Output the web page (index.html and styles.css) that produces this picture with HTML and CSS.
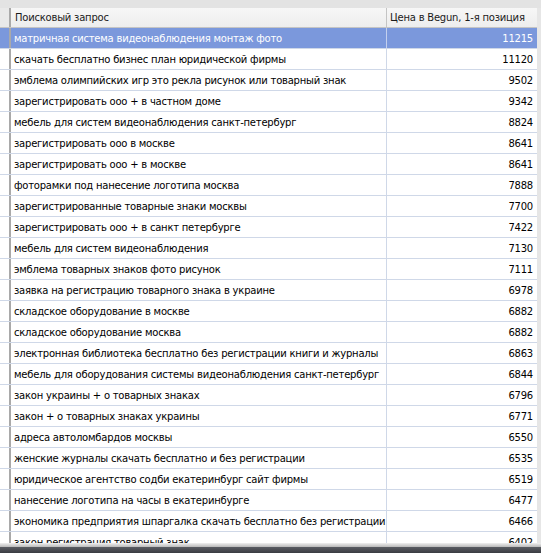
FILE: index.html
```html
<!DOCTYPE html>
<html>
<head>
<meta charset="utf-8">
<link rel="stylesheet" href="styles.css">
</head>
<body>
<div class="window">
  <div class="topbar"></div>
  <div class="main">
    <div class="grid">
      <div class="row head">
        <div class="rh"></div>
        <div class="c1">Поисковый запрос</div>
        <div class="c2">Цена в Begun, 1-я позиция</div>
      </div>
      <div class="body">
        <div class="row sel"><div class="rh"></div><div class="c1">матричная система видеонаблюдения монтаж фото</div><div class="c2">11215</div></div>
        <div class="row"><div class="rh"></div><div class="c1">скачать бесплатно бизнес план юридической фирмы</div><div class="c2">11120</div></div>
        <div class="row"><div class="rh"></div><div class="c1">эмблема олимпийских игр это рекла рисунок или товарный знак</div><div class="c2">9502</div></div>
        <div class="row"><div class="rh"></div><div class="c1">зарегистрировать ооо + в частном доме</div><div class="c2">9342</div></div>
        <div class="row"><div class="rh"></div><div class="c1">мебель для систем видеонаблюдения санкт-петербург</div><div class="c2">8824</div></div>
        <div class="row"><div class="rh"></div><div class="c1">зарегистрировать ооо в москве</div><div class="c2">8641</div></div>
        <div class="row"><div class="rh"></div><div class="c1">зарегистрировать ооо + в москве</div><div class="c2">8641</div></div>
        <div class="row"><div class="rh"></div><div class="c1">фоторамки под нанесение логотипа москва</div><div class="c2">7888</div></div>
        <div class="row"><div class="rh"></div><div class="c1">зарегистрированные товарные знаки москвы</div><div class="c2">7700</div></div>
        <div class="row"><div class="rh"></div><div class="c1">зарегистрировать ооо + в санкт петербурге</div><div class="c2">7422</div></div>
        <div class="row"><div class="rh"></div><div class="c1">мебель для систем видеонаблюдения</div><div class="c2">7130</div></div>
        <div class="row"><div class="rh"></div><div class="c1">эмблема товарных знаков фото рисунок</div><div class="c2">7111</div></div>
        <div class="row"><div class="rh"></div><div class="c1">заявка на регистрацию товарного знака в украине</div><div class="c2">6978</div></div>
        <div class="row"><div class="rh"></div><div class="c1">складское оборудование в москве</div><div class="c2">6882</div></div>
        <div class="row"><div class="rh"></div><div class="c1">складское оборудование москва</div><div class="c2">6882</div></div>
        <div class="row"><div class="rh"></div><div class="c1">электронная библиотека бесплатно без регистрации книги и журналы</div><div class="c2">6863</div></div>
        <div class="row"><div class="rh"></div><div class="c1">мебель для оборудования системы видеонаблюдения санкт-петербург</div><div class="c2">6844</div></div>
        <div class="row"><div class="rh"></div><div class="c1">закон украины + о товарных знаках</div><div class="c2">6796</div></div>
        <div class="row"><div class="rh"></div><div class="c1">закон + о товарных знаках украины</div><div class="c2">6771</div></div>
        <div class="row"><div class="rh"></div><div class="c1">адреса автоломбардов москвы</div><div class="c2">6550</div></div>
        <div class="row"><div class="rh"></div><div class="c1">женские журналы скачать бесплатно и без регистрации</div><div class="c2">6535</div></div>
        <div class="row"><div class="rh"></div><div class="c1">юридическое агентство содби екатеринбург сайт фирмы</div><div class="c2">6519</div></div>
        <div class="row"><div class="rh"></div><div class="c1">нанесение логотипа на часы в екатеринбурге</div><div class="c2">6477</div></div>
        <div class="row"><div class="rh"></div><div class="c1">экономика предприятия шпаргалка скачать бесплатно без регистрации</div><div class="c2">6466</div></div>
        <div class="row"><div class="rh"></div><div class="c1">закон регистрация товарный знак</div><div class="c2">6402</div></div>
      </div>
    </div>
    <div class="gutter"></div>
  </div>
  <div class="bottom"><div class="b1"></div><div class="b2"></div></div>
</div>
</body>
</html>
```

FILE: styles.css
```css
html, body {
  margin: 0;
  padding: 0;
  background: #e6e6e6;
}
.window {
  width: 541px;
  height: 553px;
  display: flex;
  flex-direction: column;
  overflow: hidden;
  font-family: "DejaVu Sans", Tahoma, sans-serif;
  font-size: 10px;
  letter-spacing: -0.22px;
  color: #000;
}
.topbar {
  height: 8px;
  flex: none;
  background: #e3e3e3;
}
.main {
  flex: 1;
  display: flex;
  min-height: 0;
}
.grid {
  width: 537px;
  flex: none;
  background: #fff;
  display: flex;
  flex-direction: column;
  overflow: hidden;
}
.gutter {
  flex: 1;
  background: #e6e6e6;
}
.body {
  flex: 1;
  overflow: hidden;
}
.row {
  display: grid;
  grid-template-columns: 11px 376px 1fr;
  height: 20px;
  border-bottom: 1px solid #cfd8e8;
}
.row > div {
  display: flex;
  align-items: center;
  white-space: nowrap;
  overflow: hidden;
}
.rh {
  border-right: 2px solid #a9a9a9;
}
.c1 {
  padding-left: 3px;
  border-right: 1px solid #cfd8e8;
}
.c2 {
  justify-content: flex-end;
  padding-right: 4px;
}
.head {
  height: 19px;
  background: linear-gradient(#f7f7f7, #ededed);
  border-bottom: 1px solid #c4c4c4;
}
.head .rh {
  background: #e9e9e9;
}
.head .c1 {
  padding-left: 4px;
  border-right: 1px solid #c4c4c4;
  color: #1a1a1a;
}
.head .c2 {
  justify-content: flex-start;
  padding-left: 3px;
  padding-right: 0;
  color: #1a1a1a;
}
.sel {
  background: #7b98dc;
  color: #fff;
}
.sel .c1, .sel .c2 {
  border-color: #c4d0ee;
}
.bottom {
  height: 10px;
  flex: none;
  display: flex;
  flex-direction: column;
}
.b1 {
  height: 4px;
  background: linear-gradient(#f0f0f0, #b8b8b8);
}
.b2 {
  flex: 1;
  background: linear-gradient(#5a5d63, #3a3c42);
}
```
